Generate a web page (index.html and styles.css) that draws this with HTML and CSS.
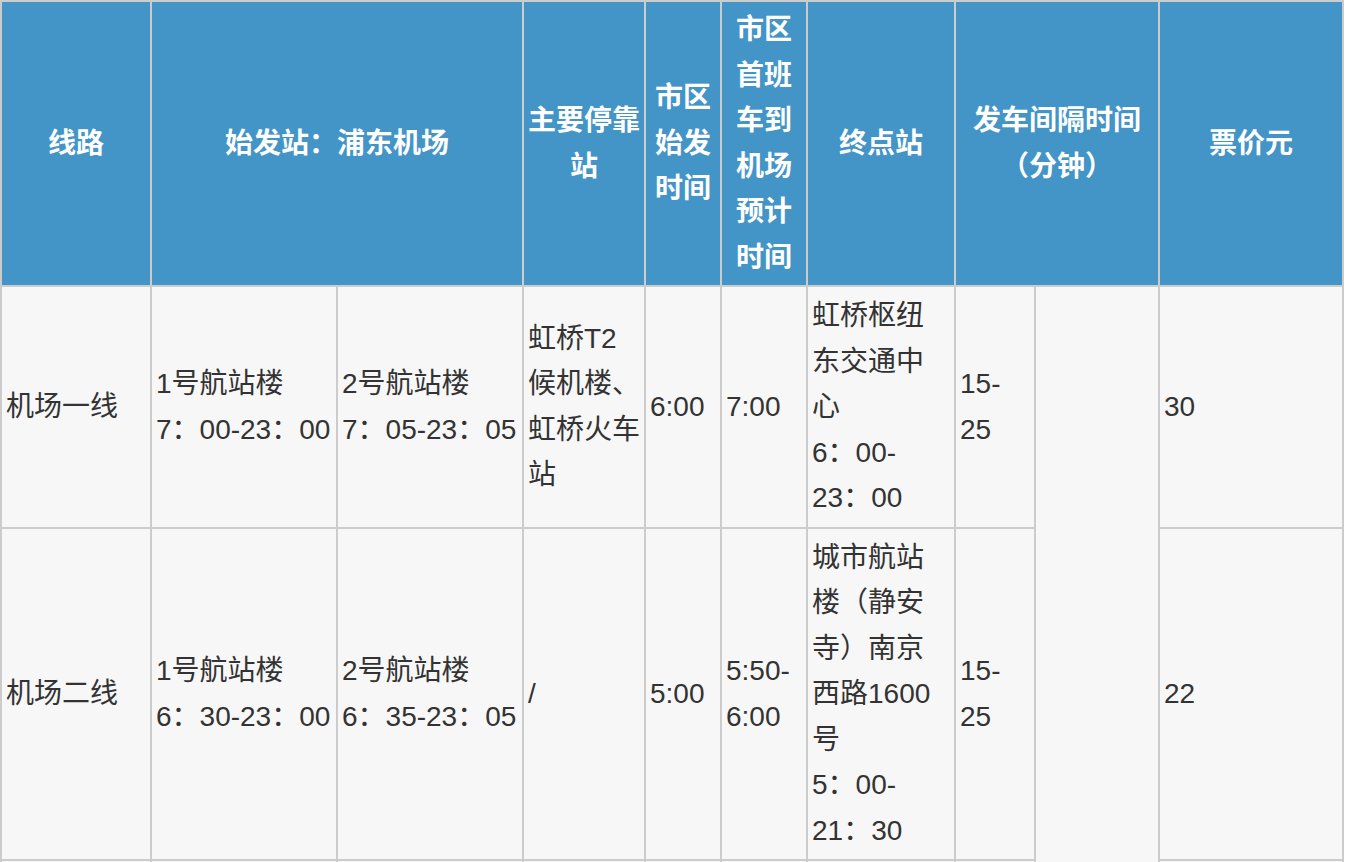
FILE: index.html
```html
<!DOCTYPE html>
<html lang="zh-CN">
<head>
<meta charset="utf-8">
<title>浦东机场巴士线路</title>
<link rel="stylesheet" href="styles.css">
</head>
<body>
<table class="bus-table">
  <colgroup>
    <col class="c-line">
    <col class="c-t1">
    <col class="c-t2">
    <col class="c-stop">
    <col class="c-start">
    <col class="c-arrive">
    <col class="c-end">
    <col class="c-int">
    <col class="c-blank">
    <col class="c-price">
  </colgroup>
  <thead>
    <tr>
      <th>线路</th>
      <th colspan="2">始发站：浦东机场</th>
      <th>主要停靠站</th>
      <th>市区始发时间</th>
      <th>市区首班车到机场预计时间</th>
      <th>终点站</th>
      <th colspan="2">发车间隔时间（分钟）</th>
      <th>票价元</th>
    </tr>
  </thead>
  <tbody>
    <tr>
      <td>机场一线</td>
      <td>1号航站楼<br>7：00-23：00</td>
      <td>2号航站楼<br>7：05-23：05</td>
      <td>虹桥T2候机楼、虹桥火车站</td>
      <td>6:00</td>
      <td>7:00</td>
      <td>虹桥枢纽东交通中心<br>6：00-<wbr>23：00</td>
      <td>15-<wbr>25</td>
      <td rowspan="3"></td>
      <td>30</td>
    </tr>
    <tr>
      <td>机场二线</td>
      <td>1号航站楼<br>6：30-23：00</td>
      <td>2号航站楼<br>6：35-23：05</td>
      <td>/</td>
      <td>5:00</td>
      <td>5:50-<wbr>6:00</td>
      <td>城市航站楼（静安寺）南京西路1600号<br>5：00-<wbr>21：30</td>
      <td>15-<wbr>25</td>
      <td>22</td>
    </tr>
    <tr>
      <td>机场三线</td>
      <td>1号航站楼<br>7：00-23：00</td>
      <td>2号航站楼<br>7：05-23：05</td>
      <td>/</td>
      <td>6:00</td>
      <td>7:00</td>
      <td>上海影城<br>6：00-<wbr>22：00</td>
      <td>15-<wbr>25</td>
      <td>16</td>
    </tr>
  </tbody>
</table>
</body>
</html>
```
FILE: styles.css
```css
html, body {
  margin: 0;
  padding: 0;
  background: #ffffff;
}

body {
  font-family: "Liberation Sans", "Noto Sans CJK SC", sans-serif;
  font-size: 28px;
  line-height: 45.5px;
  color: #333333;
}

.bus-table {
  table-layout: fixed;
  width: 1344px;
  border-collapse: separate;
  border-spacing: 0;
  border-top: 2px solid #cccccc;
  border-left: 2px solid #cccccc;
}

.c-line { width: 150px; }
.c-t1 { width: 186px; }
.c-t2 { width: 186px; }
.c-stop { width: 122px; }
.c-start { width: 76px; }
.c-arrive { width: 86px; }
.c-end { width: 148px; }
.c-int { width: 80px; }
.c-blank { width: 124px; }
.c-price { width: 184px; }

.bus-table th,
.bus-table td {
  border-right: 2px solid #cccccc;
  border-bottom: 2px solid #cccccc;
  vertical-align: middle;
  word-wrap: break-word;
}

.bus-table th {
  background: #4394c7;
  color: #ffffff;
  font-weight: bold;
  text-align: center;
  padding: 5px 4px;
}

.bus-table td {
  background: #f7f7f7;
  text-align: left;
  padding: 6px 4px;
}
```
